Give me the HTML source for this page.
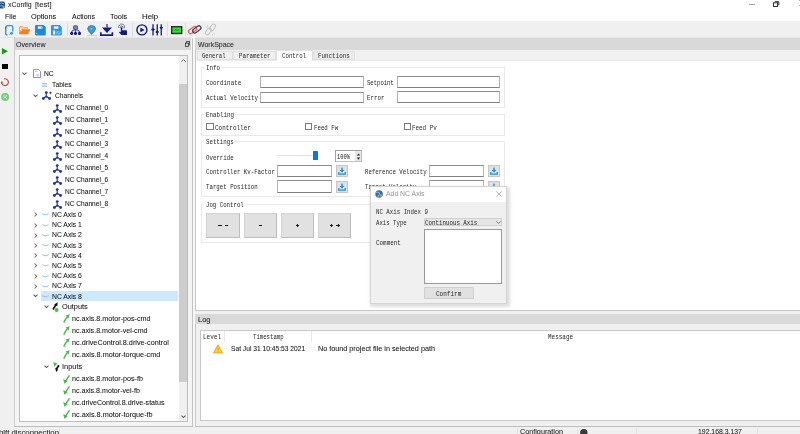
<!DOCTYPE html>
<html><head><meta charset="utf-8">
<style>
*{margin:0;padding:0;box-sizing:border-box}
html,body{width:800px;height:434px;overflow:hidden;background:#f0f0f0;font-family:"Liberation Sans",sans-serif;color:#000;position:relative}
.a{position:absolute}
.t{position:absolute;white-space:nowrap;-webkit-text-stroke:0.06px currentColor}
.m{position:absolute;white-space:nowrap;font-family:"Liberation Mono",monospace}
svg{position:absolute;overflow:visible}
</style></head><body>
<div class="a" style="left:0px;top:0px;width:800px;height:21px;background:#fff;"></div>
<div class="t" style="left:7.92px;top:1.08px;font-size:7.6px;line-height:7.6px;color:#222;transform:scaleX(0.9169);transform-origin:0 0;">xConfig</div>
<div class="t" style="left:35.26px;top:1.08px;font-size:7.6px;line-height:7.6px;color:#222;transform:scaleX(1.0067);transform-origin:0 0;">[test]</div>
<div class="t" style="left:4.82px;top:13.08px;font-size:7.6px;line-height:7.6px;color:#111;transform:scaleX(0.9304);transform-origin:0 0;">File</div>
<div class="t" style="left:31.06px;top:13.08px;font-size:7.6px;line-height:7.6px;color:#111;transform:scaleX(0.9586);transform-origin:0 0;">Options</div>
<div class="t" style="left:71.69px;top:13.08px;font-size:7.6px;line-height:7.6px;color:#111;transform:scaleX(0.9216);transform-origin:0 0;">Actions</div>
<div class="t" style="left:110.44px;top:13.08px;font-size:7.6px;line-height:7.6px;color:#111;transform:scaleX(0.9712);transform-origin:0 0;">Tools</div>
<div class="t" style="left:141.85px;top:13.08px;font-size:7.6px;line-height:7.6px;color:#111;transform:scaleX(1.0409);transform-origin:0 0;">Help</div>
<div class="a" style="left:749px;top:4px;width:5.5px;height:0.9px;background:#9a9a9a;"></div>
<svg style="left:773.4px;top:1px" width="6.5" height="6"><rect x="0.5" y="1.8" width="4" height="3.7" stroke="#333" stroke-width="1" fill="none"/><path d="M1.8 0.6 H5.8 V4.2" stroke="#333" stroke-width="1" fill="none"/></svg>
<svg style="left:798.8px;top:0.3px" width="6" height="7"><path d="M0.5 0.5 L5.5 5.5 M5.5 0.5 L0.5 5.5" stroke="#444" stroke-width="0.9"/></svg>
<div class="a" style="left:0px;top:21px;width:800px;height:16px;background:#f0f0f0;"></div>
<div class="a" style="left:0px;top:37px;width:800px;height:1px;background:#e6e6e6;"></div>
<div class="a" style="left:66.5px;top:23px;width:1px;height:13px;background:#dcdcdc;"></div>
<div class="a" style="left:131.5px;top:23px;width:1px;height:13px;background:#dcdcdc;"></div>
<div class="a" style="left:166.5px;top:23px;width:1px;height:13px;background:#dcdcdc;"></div>
<div class="a" style="left:185.2px;top:23px;width:1px;height:13px;background:#dcdcdc;"></div>
<svg style="left:4.5px;top:24.5px" width="9" height="11" viewBox="0 0 9 11"><path d="M2.6 9.8 H1.8 Q0.7 9.8 0.7 8.7 V3 M0.7 3 Q0.7 0.7 2.8 0.7 H6.5 Q7.8 0.7 7.8 2 V6.5" stroke="#2d92e2" stroke-width="1.3" fill="none"/><path d="M0.7 4.5 V2" stroke="#1a7fd0" stroke-width="1.3"/><circle cx="6.6" cy="8.3" r="1.5" fill="#3a9de6"/><path d="M4.1 9.8 H4.8" stroke="#7bbcef" stroke-width="1"/></svg>
<svg style="left:19px;top:25.5px" width="11.5" height="8.5" viewBox="0 0 11.5 8.5"><path d="M0.5 8 V1 Q0.5 0.5 1 0.5 H3.8 L4.8 1.6 H8.5 V3" stroke="#f6a55e" stroke-width="1" fill="#fbd2ae"/><path d="M2.2 3.2 H11.3 L9.2 8.2 H0.3 Z" fill="#ff7d14"/><path d="M1.5 2.3 L2.5 5" stroke="#fff" stroke-width="0.6"/></svg>
<svg style="left:35.4px;top:24.8px" width="11" height="10.5" viewBox="0 0 11 10.5"><path d="M1.2 0 H8.6 L10.8 2.2 V9.3 Q10.8 10.5 9.6 10.5 H1.2 Q0 10.5 0 9.3 V1.2 Q0 0 1.2 0 Z" fill="#1b8bda"/><rect x="2.8" y="1.4" width="4.6" height="2.3" fill="#fff"/><rect x="6.3" y="1.6" width="0.7" height="1.8" fill="#1b8bda"/><rect x="1.4" y="7.6" width="0.7" height="1.6" fill="#cfe6f8"/></svg>
<svg style="left:51px;top:24.8px" width="11" height="10.5" viewBox="0 0 11 10.5"><path d="M1.2 0 H8.6 L10.8 2.2 V9.3 Q10.8 10.5 9.6 10.5 H1.2 Q0 10.5 0 9.3 V1.2 Q0 0 1.2 0 Z" fill="#2f97e2"/><rect x="2.8" y="1.4" width="4.6" height="2.3" fill="#fff"/><rect x="2" y="5.5" width="2.2" height="4" fill="#e8f3fc"/><rect x="5.3" y="6.2" width="4.2" height="3.2" fill="#7dbdf0"/><path d="M6.5 8.5 L8.5 7" stroke="#2080d0" stroke-width="0.8"/></svg>
<svg style="left:69.5px;top:24.5px" width="11" height="10" viewBox="0 0 11 10"><rect x="3.6" y="0.8" width="3.9" height="3.4" rx="1.3" stroke="#4a50a8" stroke-width="1.1" fill="#8a8ec8"/><path d="M5.5 4 V7.5 M5.5 4.8 Q2 4.8 1.7 7.6 M5.5 4.8 Q9 4.8 9.5 7.6" stroke="#4a50a8" stroke-width="1.1" fill="none"/><circle cx="1.7" cy="8.4" r="1.55" fill="#10147a"/><circle cx="5.5" cy="8.4" r="1.55" fill="#10147a"/><circle cx="9.5" cy="8.4" r="1.55" fill="#10147a"/></svg>
<svg style="left:86.5px;top:24.6px" width="10.5" height="11" viewBox="0 0 10.5 11"><path d="M4.6 9.6 Q0.6 5.4 0.6 3.9 Q0.6 0.4 4.6 0.4 Q8.6 0.4 8.6 3.9 Q8.6 5.4 4.6 9.6 Z" fill="#2ba0ec" stroke="#204a70" stroke-width="0.5"/><circle cx="4.4" cy="3.8" r="1.1" fill="#e0a020"/><rect x="0" y="10" width="10" height="0.8" fill="#c8c8c8"/></svg>
<svg style="left:100.2px;top:24px" width="13.2" height="12" viewBox="0 0 13.2 12"><rect x="6.2" y="0" width="1.6" height="3.6" fill="#4a5ab0"/><path d="M2 3.4 H12 L7 8.9 Z" fill="#141c80"/><path d="M0.8 8.2 V11.1 H12.4 V8.2" stroke="#141c80" stroke-width="1.6" fill="none"/></svg>
<svg style="left:117.6px;top:24px" width="9.6" height="11.6" viewBox="0 0 9.6 11.6"><path d="M0.9 3.8 A2.9 2.9 0 1 1 6 4.6" stroke="#5a66c0" stroke-width="0.9" fill="none"/><path d="M2.6 4.2 A1.3 1.3 0 1 1 4.6 4.3" stroke="#3a46a8" stroke-width="0.8" fill="none"/><path d="M2.8 3.6 Q3.6 2.8 4.2 3.6 V6.2 H8.4 Q9 6.2 9 7 V11 H3.4 L0.8 8.2 Q1.2 7.4 2.4 7.9 L2.8 8.2 Z" fill="#141c80"/></svg>
<svg style="left:135.6px;top:24px" width="12" height="12" viewBox="0 0 12 12"><circle cx="5.9" cy="5.9" r="5" stroke="#141c80" stroke-width="1.4" fill="none"/><path d="M4.3 3.5 L8.6 5.9 L4.3 8.3 Z" fill="#141c80"/></svg>
<svg style="left:151px;top:24px" width="12" height="12" viewBox="0 0 12 12"><path d="M2 0.3 V11.5 M6.25 0.3 V11.5 M10.25 0.3 V11.5" stroke="#141c80" stroke-width="1.3"/><rect x="0.2" y="4.6" width="3.6" height="1.8" rx="0.9" fill="#141c80"/><rect x="4.6" y="7" width="3.3" height="2" rx="1" fill="#141c80"/><rect x="8.7" y="2.8" width="3.2" height="2" rx="1" fill="#141c80"/></svg>
<svg style="left:170.5px;top:25.8px" width="11.4" height="8.2" viewBox="0 0 11.4 8.2"><rect x="0.7" y="0.7" width="10" height="6.8" fill="#2fe02f" stroke="#2a2a36" stroke-width="1.4"/><path d="M3.6 4.5 Q4.8 3 5.8 4 Q6.8 5 8 3.6" stroke="#1a6a1a" stroke-width="0.8" fill="none"/></svg>
<svg style="left:186px;top:23px" width="34" height="14" viewBox="0 0 34 14"><g transform="translate(6.6 7.1) rotate(-37)"><rect x="-4.6" y="-2.1" width="9.2" height="4.2" rx="2.1" stroke="#f06262" stroke-width="1.35" fill="none"/></g><g transform="translate(10.8 6.4) rotate(-37)"><rect x="-4.6" y="-2.1" width="9.2" height="4.2" rx="2.1" stroke="#3b4a5e" stroke-width="1.35" fill="none"/></g><g transform="translate(22.3 8.4) rotate(-55)"><rect x="-3.6" y="-2" width="7.2" height="4" rx="2" stroke="#c6c6c6" stroke-width="1.1" fill="none"/></g><g transform="translate(26.6 4.4) rotate(-55)"><rect x="-3.6" y="-2" width="7.2" height="4" rx="2" stroke="#c6c6c6" stroke-width="1.1" fill="none"/></g><path d="M21.3 2.3 L21.9 4 M19.8 4.2 L21.2 4.8 M27.6 10.3 L28.8 11 M26.4 11.2 L26.8 12.6" stroke="#c6c6c6" stroke-width="0.8"/></svg>
<div class="a" style="left:14px;top:38px;width:178px;height:389px;background:#f4f4f4;"></div>
<div class="a" style="left:13.5px;top:37px;width:1.3px;height:390px;background:#cbcbcb;"></div>
<div class="a" style="left:14.8px;top:38px;width:176.7px;height:11.8px;background:#d9d9d9;"></div>
<div class="t" style="left:15.87px;top:40.98px;font-size:7.6px;line-height:7.6px;color:#222;transform:scaleX(0.9319);transform-origin:0 0;">Overview</div>
<div class="a" style="left:19px;top:55px;width:169px;height:367px;background:#fff;border:1px solid #bdbdbd"></div>
<div class="a" style="left:179px;top:56px;width:8px;height:365px;background:#f0f0f0;"></div>
<div class="a" style="left:179px;top:84px;width:8px;height:298px;background:#cdcdcd;"></div>
<div class="a" style="left:192px;top:37px;width:3px;height:390px;background:#f7f7f7;"></div>
<div class="a" style="left:191.6px;top:38px;width:1px;height:389px;background:#c2c2c2;"></div>
<svg style="left:184.7px;top:41px" width="5" height="6"><rect x="1.6" y="0.5" width="2.9" height="3.3" stroke="#444" stroke-width="0.9" fill="none"/><rect x="0.5" y="2.2" width="2.9" height="3.3" stroke="#444" stroke-width="0.9" fill="#d9d9d9"/></svg>
<div class="a" style="left:40.5px;top:291px;width:137.5px;height:9.7px;background:#cde8ff;"></div>
<svg style="left:22px;top:72px" width="5" height="4"><path d="M0.5 0.6 L2.5 2.6 L4.5 0.6" fill="none" stroke="#5a5a5a" stroke-width="1.05"/></svg>
<svg style="left:33px;top:69px" width="8" height="9"><path d="M0.5 0.5 H5.5 L7.5 2.5 V8.5 H0.5 Z" stroke="#7d82c8" stroke-width="0.9" fill="none"/><path d="M2.3 2.5 h1.5 M5 5 v2.5 M2.5 6 h1" stroke="#8a8fd0" stroke-width="0.8"/></svg>
<div class="t" style="left:44.05px;top:70.18px;font-size:7.6px;line-height:7.6px;color:#111;transform:scaleX(0.8838);transform-origin:0 0;">NC</div>
<svg style="left:42px;top:83px" width="5" height="4"><path d="M0 0.5 h5 M0 2 h5 M0 3.5 h5" stroke="#9cc2ea" stroke-width="0.9"/></svg>
<div class="t" style="left:52.05px;top:81.38px;font-size:7.6px;line-height:7.6px;color:#111;transform:scaleX(0.8917);transform-origin:0 0;">Tables</div>
<svg style="left:32.5px;top:93.7px" width="5" height="4"><path d="M0.5 0.6 L2.5 2.6 L4.5 0.6" fill="none" stroke="#5a5a5a" stroke-width="1.05"/></svg>
<svg style="left:42.4px;top:90.8px" width="10" height="9"><path d="M4.3 1.5 L4.3 4.8 L1.3 7.6 M4.3 4.8 L7.4 7.6 M2.6 6.2 H6" stroke="#27379a" stroke-width="1.1" fill="none"/><circle cx="4.3" cy="1.6" r="1.45" fill="#27379a"/><circle cx="1.4" cy="7.5" r="1.45" fill="#27379a"/><circle cx="7.6" cy="7.5" r="1.45" fill="#27379a"/><circle cx="8.5" cy="1.8" r="1.1" fill="#27379a"/></svg>
<div class="t" style="left:54.57px;top:92.18px;font-size:7.6px;line-height:7.6px;color:#111;transform:scaleX(0.8742);transform-origin:0 0;">Channels</div>
<svg style="left:53.4px;top:103.60000000000001px" width="9" height="9"><path d="M4.2 1.5 L4.2 4.8 L1.3 7.6 M4.2 4.8 L7.6 7.6 M2.6 6.2 H6" stroke="#27379a" stroke-width="1.1" fill="none"/><circle cx="4.2" cy="1.6" r="1.45" fill="#27379a"/><circle cx="1.4" cy="7.5" r="1.45" fill="#27379a"/><circle cx="7.6" cy="7.5" r="1.45" fill="#27379a"/></svg>
<div class="t" style="left:65.46px;top:104.08px;font-size:7.6px;line-height:7.6px;color:#111;transform:scaleX(0.8664);transform-origin:0 0;">NC Channel_0</div>
<svg style="left:53.4px;top:115.65px" width="9" height="9"><path d="M4.2 1.5 L4.2 4.8 L1.3 7.6 M4.2 4.8 L7.6 7.6 M2.6 6.2 H6" stroke="#27379a" stroke-width="1.1" fill="none"/><circle cx="4.2" cy="1.6" r="1.45" fill="#27379a"/><circle cx="1.4" cy="7.5" r="1.45" fill="#27379a"/><circle cx="7.6" cy="7.5" r="1.45" fill="#27379a"/></svg>
<div class="t" style="left:65.46px;top:116.13px;font-size:7.6px;line-height:7.6px;color:#111;transform:scaleX(0.8678);transform-origin:0 0;">NC Channel_1</div>
<svg style="left:53.4px;top:127.7px" width="9" height="9"><path d="M4.2 1.5 L4.2 4.8 L1.3 7.6 M4.2 4.8 L7.6 7.6 M2.6 6.2 H6" stroke="#27379a" stroke-width="1.1" fill="none"/><circle cx="4.2" cy="1.6" r="1.45" fill="#27379a"/><circle cx="1.4" cy="7.5" r="1.45" fill="#27379a"/><circle cx="7.6" cy="7.5" r="1.45" fill="#27379a"/></svg>
<div class="t" style="left:65.46px;top:128.18px;font-size:7.6px;line-height:7.6px;color:#111;transform:scaleX(0.8680);transform-origin:0 0;">NC Channel_2</div>
<svg style="left:53.4px;top:139.75px" width="9" height="9"><path d="M4.2 1.5 L4.2 4.8 L1.3 7.6 M4.2 4.8 L7.6 7.6 M2.6 6.2 H6" stroke="#27379a" stroke-width="1.1" fill="none"/><circle cx="4.2" cy="1.6" r="1.45" fill="#27379a"/><circle cx="1.4" cy="7.5" r="1.45" fill="#27379a"/><circle cx="7.6" cy="7.5" r="1.45" fill="#27379a"/></svg>
<div class="t" style="left:65.46px;top:140.23px;font-size:7.6px;line-height:7.6px;color:#111;transform:scaleX(0.8671);transform-origin:0 0;">NC Channel_3</div>
<svg style="left:53.4px;top:151.8px" width="9" height="9"><path d="M4.2 1.5 L4.2 4.8 L1.3 7.6 M4.2 4.8 L7.6 7.6 M2.6 6.2 H6" stroke="#27379a" stroke-width="1.1" fill="none"/><circle cx="4.2" cy="1.6" r="1.45" fill="#27379a"/><circle cx="1.4" cy="7.5" r="1.45" fill="#27379a"/><circle cx="7.6" cy="7.5" r="1.45" fill="#27379a"/></svg>
<div class="t" style="left:65.46px;top:152.28px;font-size:7.6px;line-height:7.6px;color:#111;transform:scaleX(0.8652);transform-origin:0 0;">NC Channel_4</div>
<svg style="left:53.4px;top:163.85px" width="9" height="9"><path d="M4.2 1.5 L4.2 4.8 L1.3 7.6 M4.2 4.8 L7.6 7.6 M2.6 6.2 H6" stroke="#27379a" stroke-width="1.1" fill="none"/><circle cx="4.2" cy="1.6" r="1.45" fill="#27379a"/><circle cx="1.4" cy="7.5" r="1.45" fill="#27379a"/><circle cx="7.6" cy="7.5" r="1.45" fill="#27379a"/></svg>
<div class="t" style="left:65.46px;top:164.33px;font-size:7.6px;line-height:7.6px;color:#111;transform:scaleX(0.8668);transform-origin:0 0;">NC Channel_5</div>
<svg style="left:53.4px;top:175.9px" width="9" height="9"><path d="M4.2 1.5 L4.2 4.8 L1.3 7.6 M4.2 4.8 L7.6 7.6 M2.6 6.2 H6" stroke="#27379a" stroke-width="1.1" fill="none"/><circle cx="4.2" cy="1.6" r="1.45" fill="#27379a"/><circle cx="1.4" cy="7.5" r="1.45" fill="#27379a"/><circle cx="7.6" cy="7.5" r="1.45" fill="#27379a"/></svg>
<div class="t" style="left:65.46px;top:176.38px;font-size:7.6px;line-height:7.6px;color:#111;transform:scaleX(0.8671);transform-origin:0 0;">NC Channel_6</div>
<svg style="left:53.4px;top:187.95px" width="9" height="9"><path d="M4.2 1.5 L4.2 4.8 L1.3 7.6 M4.2 4.8 L7.6 7.6 M2.6 6.2 H6" stroke="#27379a" stroke-width="1.1" fill="none"/><circle cx="4.2" cy="1.6" r="1.45" fill="#27379a"/><circle cx="1.4" cy="7.5" r="1.45" fill="#27379a"/><circle cx="7.6" cy="7.5" r="1.45" fill="#27379a"/></svg>
<div class="t" style="left:65.46px;top:188.43px;font-size:7.6px;line-height:7.6px;color:#111;transform:scaleX(0.8680);transform-origin:0 0;">NC Channel_7</div>
<svg style="left:53.4px;top:200.0px" width="9" height="9"><path d="M4.2 1.5 L4.2 4.8 L1.3 7.6 M4.2 4.8 L7.6 7.6 M2.6 6.2 H6" stroke="#27379a" stroke-width="1.1" fill="none"/><circle cx="4.2" cy="1.6" r="1.45" fill="#27379a"/><circle cx="1.4" cy="7.5" r="1.45" fill="#27379a"/><circle cx="7.6" cy="7.5" r="1.45" fill="#27379a"/></svg>
<div class="t" style="left:65.46px;top:200.48px;font-size:7.6px;line-height:7.6px;color:#111;transform:scaleX(0.8671);transform-origin:0 0;">NC Channel_8</div>
<svg style="left:34px;top:212.3px" width="4" height="5"><path d="M0.6 0.5 L2.6 2.5 L0.6 4.5" fill="none" stroke="#6a6a6a" stroke-width="1.05"/></svg>
<svg style="left:42px;top:213.3px" width="7" height="3"><path d="M0.3 0.8 Q3.5 2.8 6.7 0.8" stroke="#8fb8e8" stroke-width="0.9" fill="none"/></svg>
<div class="t" style="left:51.64px;top:210.98px;font-size:7.6px;line-height:7.6px;color:#111;transform:scaleX(0.8936);transform-origin:0 0;">NC Axis 0</div>
<svg style="left:34px;top:222.5px" width="4" height="5"><path d="M0.6 0.5 L2.6 2.5 L0.6 4.5" fill="none" stroke="#6a6a6a" stroke-width="1.05"/></svg>
<svg style="left:42px;top:223.5px" width="7" height="3"><path d="M0.3 0.8 Q3.5 2.8 6.7 0.8" stroke="#8fb8e8" stroke-width="0.9" fill="none"/></svg>
<div class="t" style="left:51.64px;top:221.18px;font-size:7.6px;line-height:7.6px;color:#111;transform:scaleX(0.8957);transform-origin:0 0;">NC Axis 1</div>
<svg style="left:34px;top:232.70000000000002px" width="4" height="5"><path d="M0.6 0.5 L2.6 2.5 L0.6 4.5" fill="none" stroke="#6a6a6a" stroke-width="1.05"/></svg>
<svg style="left:42px;top:233.70000000000002px" width="7" height="3"><path d="M0.3 0.8 Q3.5 2.8 6.7 0.8" stroke="#8fb8e8" stroke-width="0.9" fill="none"/></svg>
<div class="t" style="left:51.64px;top:231.38px;font-size:7.6px;line-height:7.6px;color:#111;transform:scaleX(0.8961);transform-origin:0 0;">NC Axis 2</div>
<svg style="left:34px;top:242.9px" width="4" height="5"><path d="M0.6 0.5 L2.6 2.5 L0.6 4.5" fill="none" stroke="#6a6a6a" stroke-width="1.05"/></svg>
<svg style="left:42px;top:243.9px" width="7" height="3"><path d="M0.3 0.8 Q3.5 2.8 6.7 0.8" stroke="#8fb8e8" stroke-width="0.9" fill="none"/></svg>
<div class="t" style="left:51.64px;top:241.58px;font-size:7.6px;line-height:7.6px;color:#111;transform:scaleX(0.8947);transform-origin:0 0;">NC Axis 3</div>
<svg style="left:34px;top:253.10000000000002px" width="4" height="5"><path d="M0.6 0.5 L2.6 2.5 L0.6 4.5" fill="none" stroke="#6a6a6a" stroke-width="1.05"/></svg>
<svg style="left:42px;top:254.10000000000002px" width="7" height="3"><path d="M0.3 0.8 Q3.5 2.8 6.7 0.8" stroke="#8fb8e8" stroke-width="0.9" fill="none"/></svg>
<div class="t" style="left:51.64px;top:251.78px;font-size:7.6px;line-height:7.6px;color:#111;transform:scaleX(0.8917);transform-origin:0 0;">NC Axis 4</div>
<svg style="left:34px;top:263.3px" width="4" height="5"><path d="M0.6 0.5 L2.6 2.5 L0.6 4.5" fill="none" stroke="#6a6a6a" stroke-width="1.05"/></svg>
<svg style="left:42px;top:264.3px" width="7" height="3"><path d="M0.3 0.8 Q3.5 2.8 6.7 0.8" stroke="#8fb8e8" stroke-width="0.9" fill="none"/></svg>
<div class="t" style="left:51.64px;top:261.98px;font-size:7.6px;line-height:7.6px;color:#111;transform:scaleX(0.8943);transform-origin:0 0;">NC Axis 5</div>
<svg style="left:34px;top:273.5px" width="4" height="5"><path d="M0.6 0.5 L2.6 2.5 L0.6 4.5" fill="none" stroke="#6a6a6a" stroke-width="1.05"/></svg>
<svg style="left:42px;top:274.5px" width="7" height="3"><path d="M0.3 0.8 Q3.5 2.8 6.7 0.8" stroke="#8fb8e8" stroke-width="0.9" fill="none"/></svg>
<div class="t" style="left:51.64px;top:272.18px;font-size:7.6px;line-height:7.6px;color:#111;transform:scaleX(0.8947);transform-origin:0 0;">NC Axis 6</div>
<svg style="left:34px;top:283.7px" width="4" height="5"><path d="M0.6 0.5 L2.6 2.5 L0.6 4.5" fill="none" stroke="#6a6a6a" stroke-width="1.05"/></svg>
<svg style="left:42px;top:284.7px" width="7" height="3"><path d="M0.3 0.8 Q3.5 2.8 6.7 0.8" stroke="#8fb8e8" stroke-width="0.9" fill="none"/></svg>
<div class="t" style="left:51.64px;top:282.38px;font-size:7.6px;line-height:7.6px;color:#111;transform:scaleX(0.8961);transform-origin:0 0;">NC Axis 7</div>
<svg style="left:32.5px;top:294.4px" width="5" height="4"><path d="M0.5 0.6 L2.5 2.6 L4.5 0.6" fill="none" stroke="#5a5a5a" stroke-width="1.05"/></svg>
<svg style="left:42px;top:294.9px" width="7" height="3"><path d="M0.3 0.8 Q3.5 2.8 6.7 0.8" stroke="#8fb8e8" stroke-width="0.9" fill="none"/></svg>
<div class="t" style="left:51.64px;top:292.58px;font-size:7.6px;line-height:7.6px;color:#111;transform:scaleX(0.8947);transform-origin:0 0;">NC Axis 8</div>
<svg style="left:43.5px;top:305.3px" width="5" height="4"><path d="M0.5 0.6 L2.5 2.6 L4.5 0.6" fill="none" stroke="#5a5a5a" stroke-width="1.05"/></svg>
<svg style="left:52px;top:302px" width="7" height="10"><path d="M1 7.5 L4 2.5" stroke="#111" stroke-width="1.6"/><path d="M2.2 2.4 L5.6 0.2 L5.4 4.2 Z" fill="#111"/><circle cx="4.6" cy="8" r="2" fill="#48bd48"/></svg>
<div class="t" style="left:61.85px;top:303.48px;font-size:7.6px;line-height:7.6px;color:#111;transform:scaleX(0.9698);transform-origin:0 0;">Outputs</div>
<svg style="left:63.3px;top:314.25px" width="7" height="9"><path d="M0.8 8.6 Q2.3 5 4.6 2.4" stroke="#48bd48" stroke-width="1.5" fill="none"/><path d="M2.6 1.6 L6.6 0.2 L5.8 4.2 Z" fill="#48bd48"/></svg>
<div class="t" style="left:72.23px;top:315.43px;font-size:7.6px;line-height:7.6px;color:#111;transform:scaleX(0.9451);transform-origin:0 0;">nc.axis.8.motor-pos-cmd</div>
<svg style="left:63.3px;top:326.2px" width="7" height="9"><path d="M0.8 8.6 Q2.3 5 4.6 2.4" stroke="#48bd48" stroke-width="1.5" fill="none"/><path d="M2.6 1.6 L6.6 0.2 L5.8 4.2 Z" fill="#48bd48"/></svg>
<div class="t" style="left:72.23px;top:327.38px;font-size:7.6px;line-height:7.6px;color:#111;transform:scaleX(0.9375);transform-origin:0 0;">nc.axis.8.motor-vel-cmd</div>
<svg style="left:63.3px;top:338.15px" width="7" height="9"><path d="M0.8 8.6 Q2.3 5 4.6 2.4" stroke="#48bd48" stroke-width="1.5" fill="none"/><path d="M2.6 1.6 L6.6 0.2 L5.8 4.2 Z" fill="#48bd48"/></svg>
<div class="t" style="left:72.22px;top:339.33px;font-size:7.6px;line-height:7.6px;color:#111;transform:scaleX(0.9554);transform-origin:0 0;">nc.driveControl.8.drive-control</div>
<svg style="left:63.3px;top:350.1px" width="7" height="9"><path d="M0.8 8.6 Q2.3 5 4.6 2.4" stroke="#48bd48" stroke-width="1.5" fill="none"/><path d="M2.6 1.6 L6.6 0.2 L5.8 4.2 Z" fill="#48bd48"/></svg>
<div class="t" style="left:72.22px;top:351.28px;font-size:7.6px;line-height:7.6px;color:#111;transform:scaleX(0.9551);transform-origin:0 0;">nc.axis.8.motor-torque-cmd</div>
<svg style="left:43.5px;top:365px" width="5" height="4"><path d="M0.5 0.6 L2.5 2.6 L4.5 0.6" fill="none" stroke="#5a5a5a" stroke-width="1.05"/></svg>
<svg style="left:52.5px;top:361.5px" width="7" height="10"><path d="M0.2 0.2 L4.4 1.2 L1.4 4.8 Z" fill="#48bd48"/><path d="M5.8 3.2 L3.2 7.5" stroke="#111" stroke-width="1.8"/><path d="M2.2 6 L3.2 9.9 L5.2 7.8 Z" fill="#111"/></svg>
<div class="t" style="left:61.52px;top:363.18px;font-size:7.6px;line-height:7.6px;color:#111;transform:scaleX(0.9732);transform-origin:0 0;">Inputs</div>
<svg style="left:63.3px;top:374.5px" width="7" height="9"><path d="M6.4 0.4 Q4.2 3.5 2.6 6.4" stroke="#48bd48" stroke-width="1.5" fill="none"/><path d="M0.2 4.0 L1.4 8.8 L4.6 6.2 Z" fill="#48bd48"/></svg>
<div class="t" style="left:72.23px;top:375.18px;font-size:7.6px;line-height:7.6px;color:#111;transform:scaleX(0.9440);transform-origin:0 0;">nc.axis.8.motor-pos-fb</div>
<svg style="left:63.3px;top:386.45px" width="7" height="9"><path d="M6.4 0.4 Q4.2 3.5 2.6 6.4" stroke="#48bd48" stroke-width="1.5" fill="none"/><path d="M0.2 4.0 L1.4 8.8 L4.6 6.2 Z" fill="#48bd48"/></svg>
<div class="t" style="left:72.23px;top:387.13px;font-size:7.6px;line-height:7.6px;color:#111;transform:scaleX(0.9356);transform-origin:0 0;">nc.axis.8.motor-vel-fb</div>
<svg style="left:63.3px;top:398.4px" width="7" height="9"><path d="M6.4 0.4 Q4.2 3.5 2.6 6.4" stroke="#48bd48" stroke-width="1.5" fill="none"/><path d="M0.2 4.0 L1.4 8.8 L4.6 6.2 Z" fill="#48bd48"/></svg>
<div class="t" style="left:72.23px;top:399.08px;font-size:7.6px;line-height:7.6px;color:#111;transform:scaleX(0.9372);transform-origin:0 0;">nc.driveControl.8.drive-status</div>
<svg style="left:63.3px;top:410.35px" width="7" height="9"><path d="M6.4 0.4 Q4.2 3.5 2.6 6.4" stroke="#48bd48" stroke-width="1.5" fill="none"/><path d="M0.2 4.0 L1.4 8.8 L4.6 6.2 Z" fill="#48bd48"/></svg>
<div class="t" style="left:72.22px;top:411.03px;font-size:7.6px;line-height:7.6px;color:#111;transform:scaleX(0.9550);transform-origin:0 0;">nc.axis.8.motor-torque-fb</div>
<svg style="left:181px;top:58.5px" width="5" height="3"><path d="M0.3 2.7 L2.5 0.5 L4.7 2.7" fill="none" stroke="#555" stroke-width="0.8"/></svg>
<svg style="left:181px;top:414.5px" width="5" height="4"><path d="M0.5 0.6 L2.5 2.6 L4.5 0.6" fill="none" stroke="#5a5a5a" stroke-width="1.05"/></svg>
<div class="a" style="left:195px;top:38px;width:605px;height:12px;background:#d9d9d9;"></div>
<div class="t" style="left:197.77px;top:40.98px;font-size:7.6px;line-height:7.6px;color:#222;transform:scaleX(0.9181);transform-origin:0 0;">WorkSpace</div>
<div class="a" style="left:195px;top:50px;width:605px;height:261px;background:#fff;border-left:1px solid #c8c8c8;border-bottom:1px solid #c8c8c8"></div>
<div class="a" style="left:196px;top:50px;width:604px;height:9.5px;background:#f0f0f0;"></div>
<div class="a" style="left:196.5px;top:50.5px;width:36.0px;height:9.5px;background:#f0f0f0;border:1px solid;border-color:#e0e0e0;"></div>
<div class="a" style="left:232.5px;top:50.5px;width:43.19999999999999px;height:9.5px;background:#f0f0f0;border:1px solid;border-color:#e0e0e0;"></div>
<div class="a" style="left:313.2px;top:50.5px;width:42.0px;height:9.5px;background:#ebebeb;border:1px solid;border-color:#e0e0e0;"></div>
<div class="a" style="left:275.7px;top:50px;width:37.5px;height:10px;background:#fff;border:1px solid;border-color:#e0e0e0;border-bottom:none"></div>
<div class="a" style="left:196px;top:59.5px;width:604px;height:0.8px;background:#ebebeb;"></div>
<div class="a" style="left:276.7px;top:59.3px;width:35.5px;height:2px;background:#fff;"></div>
<div class="m" style="left:201.69px;top:53.24px;font-size:7.0px;line-height:7.0px;color:#262626;transform:scaleX(0.8032);transform-origin:0 0;">General</div>
<div class="m" style="left:238.54px;top:53.24px;font-size:7.0px;line-height:7.0px;color:#262626;transform:scaleX(0.8326);transform-origin:0 0;">Parameter</div>
<div class="m" style="left:281.88px;top:53.24px;font-size:7.0px;line-height:7.0px;color:#262626;transform:scaleX(0.8206);transform-origin:0 0;">Control</div>
<div class="m" style="left:317.95px;top:53.24px;font-size:7.0px;line-height:7.0px;color:#262626;transform:scaleX(0.8394);transform-origin:0 0;">Functions</div>
<div class="a" style="left:200.9px;top:67.2px;width:304.6px;height:40.599999999999994px;background:transparent;border:1px solid;border-color:#e9e9e9;"></div>
<div class="a" style="left:204.6px;top:65.2px;width:17.1px;height:4px;background:#fff;"></div>
<div class="m" style="left:206.03px;top:65.14px;font-size:7.0px;line-height:7.0px;color:#262626;transform:scaleX(0.8362);transform-origin:0 0;">Info</div>
<div class="m" style="left:205.58px;top:80.24px;font-size:7.0px;line-height:7.0px;color:#262626;transform:scaleX(0.8380);transform-origin:0 0;">Coordinate</div>
<div class="m" style="left:205.90px;top:95.14px;font-size:7.0px;line-height:7.0px;color:#262626;transform:scaleX(0.8252);transform-origin:0 0;">Actual Velocity</div>
<div class="a" style="left:259.7px;top:76.2px;width:104.0px;height:11.5px;background:#fff;border:1px solid;border-color:#8c8c8c #b4b4b4 #808080 #b4b4b4;"></div>
<div class="a" style="left:259.7px;top:91.5px;width:104.0px;height:11.200000000000003px;background:#fff;border:1px solid;border-color:#8c8c8c #b4b4b4 #808080 #b4b4b4;"></div>
<div class="m" style="left:366.79px;top:80.14px;font-size:7.0px;line-height:7.0px;color:#262626;transform:scaleX(0.7971);transform-origin:0 0;">Setpoint</div>
<div class="m" style="left:366.54px;top:95.14px;font-size:7.0px;line-height:7.0px;color:#262626;transform:scaleX(0.8323);transform-origin:0 0;">Error</div>
<div class="a" style="left:397px;top:76.4px;width:103px;height:11.199999999999989px;background:#fff;border:1px solid;border-color:#8c8c8c #b4b4b4 #808080 #b4b4b4;"></div>
<div class="a" style="left:397px;top:91.3px;width:103px;height:11.299999999999997px;background:#fff;border:1px solid;border-color:#8c8c8c #b4b4b4 #808080 #b4b4b4;"></div>
<div class="a" style="left:200.9px;top:114.2px;width:304.6px;height:21.60000000000001px;background:transparent;border:1px solid;border-color:#e9e9e9;"></div>
<div class="a" style="left:204px;top:112.2px;width:31px;height:4px;background:#fff;"></div>
<div class="m" style="left:205.54px;top:112.14px;font-size:7.0px;line-height:7.0px;color:#262626;transform:scaleX(0.8318);transform-origin:0 0;">Enabling</div>
<div class="a" style="left:206.4px;top:123.2px;width:7.199999999999989px;height:7.200000000000003px;background:#fff;border:1px solid;border-color:#7a7a7a;"></div>
<div class="m" style="left:214.67px;top:124.54px;font-size:7.0px;line-height:7.0px;color:#262626;transform:scaleX(0.8537);transform-origin:0 0;">Controller</div>
<div class="a" style="left:305px;top:123.2px;width:7.199999999999989px;height:7.200000000000003px;background:#fff;border:1px solid;border-color:#7a7a7a;"></div>
<div class="m" style="left:313.86px;top:124.54px;font-size:7.0px;line-height:7.0px;color:#262626;transform:scaleX(0.8229);transform-origin:0 0;">Feed Fw</div>
<div class="a" style="left:404px;top:123.2px;width:7.199999999999989px;height:7.200000000000003px;background:#fff;border:1px solid;border-color:#7a7a7a;"></div>
<div class="m" style="left:412.45px;top:124.54px;font-size:7.0px;line-height:7.0px;color:#262626;transform:scaleX(0.8418);transform-origin:0 0;">Feed Pv</div>
<div class="a" style="left:200.9px;top:141.4px;width:304.6px;height:56.099999999999994px;background:transparent;border:1px solid;border-color:#e9e9e9;"></div>
<div class="a" style="left:204px;top:139.4px;width:31px;height:4px;background:#fff;"></div>
<div class="m" style="left:205.78px;top:139.34px;font-size:7.0px;line-height:7.0px;color:#262626;transform:scaleX(0.8240);transform-origin:0 0;">Settings</div>
<div class="m" style="left:205.72px;top:154.54px;font-size:7.0px;line-height:7.0px;color:#262626;transform:scaleX(0.8229);transform-origin:0 0;">Override</div>
<div class="a" style="left:277px;top:154.8px;width:36px;height:1.6px;background:#e2e2e2;"></div>
<div class="a" style="left:312.6px;top:151.3px;width:5.5px;height:8.7px;background:#0a78d8;border-radius:0.5px"></div>
<div class="a" style="left:335px;top:150px;width:26.600000000000023px;height:11.800000000000011px;background:#fff;border:1px solid;border-color:#a0a0a0 #c0c0c0 #c0c0c0 #a0a0a0;"></div>
<div class="m" style="left:336.81px;top:153.94px;font-size:7.0px;line-height:7.0px;color:#111;transform:scaleX(0.7667);transform-origin:0 0;">100%</div>
<div class="a" style="left:355px;top:151px;width:5.6px;height:9.8px;background:#e6e6e6;"></div>
<svg style="left:355.5px;top:151.5px" width="5" height="9"><path d="M0.9 3.6 L2.5 1.4 L4.1 3.6 Z M0.9 5.6 L2.5 7.8 L4.1 5.6 Z" fill="#222"/></svg>
<div class="m" style="left:205.68px;top:168.94px;font-size:7.0px;line-height:7.0px;color:#262626;transform:scaleX(0.8192);transform-origin:0 0;">Controller Kv-Factor</div>
<div class="a" style="left:277.2px;top:164.9px;width:55.30000000000001px;height:12.400000000000006px;background:#fff;border:1px solid;border-color:#8c8c8c #b4b4b4 #808080 #b4b4b4;"></div>
<div class="a" style="left:335.7px;top:165.2px;width:12.0px;height:12.0px;background:#e1e1e1;border:1px solid;border-color:#c6c6c6;"></div>
<svg style="left:337.7px;top:167.2px" width="8" height="8"><rect x="3.3" y="0.6" width="1.4" height="2.6" fill="#1a8ad8"/><path d="M1.6 3 H6.4 L4 5.4 Z" fill="#1a8ad8"/><path d="M0.8 5 V7.2 H7.2 V5" stroke="#1a8ad8" stroke-width="1.2" fill="none"/></svg>
<div class="m" style="left:205.79px;top:184.14px;font-size:7.0px;line-height:7.0px;color:#262626;transform:scaleX(0.8207);transform-origin:0 0;">Target Position</div>
<div class="a" style="left:277.2px;top:180.1px;width:55.30000000000001px;height:12.5px;background:#fff;border:1px solid;border-color:#8c8c8c #b4b4b4 #808080 #b4b4b4;"></div>
<div class="a" style="left:335.7px;top:180.8px;width:12.0px;height:12.0px;background:#e1e1e1;border:1px solid;border-color:#c6c6c6;"></div>
<svg style="left:337.7px;top:182.8px" width="8" height="8"><rect x="3.3" y="0.6" width="1.4" height="2.6" fill="#1a8ad8"/><path d="M1.6 3 H6.4 L4 5.4 Z" fill="#1a8ad8"/><path d="M0.8 5 V7.2 H7.2 V5" stroke="#1a8ad8" stroke-width="1.2" fill="none"/></svg>
<div class="m" style="left:364.55px;top:168.94px;font-size:7.0px;line-height:7.0px;color:#262626;transform:scaleX(0.8152);transform-origin:0 0;">Reference Velocity</div>
<div class="a" style="left:429px;top:165px;width:55.39999999999998px;height:12.199999999999989px;background:#fff;border:1px solid;border-color:#8c8c8c #b4b4b4 #808080 #b4b4b4;"></div>
<div class="a" style="left:488px;top:165px;width:12px;height:12px;background:#e1e1e1;border:1px solid;border-color:#c6c6c6;"></div>
<svg style="left:490.0px;top:167.0px" width="8" height="8"><rect x="3.3" y="0.6" width="1.4" height="2.6" fill="#1a8ad8"/><path d="M1.6 3 H6.4 L4 5.4 Z" fill="#1a8ad8"/><path d="M0.8 5 V7.2 H7.2 V5" stroke="#1a8ad8" stroke-width="1.2" fill="none"/></svg>
<div class="m" style="left:364.79px;top:184.14px;font-size:7.0px;line-height:7.0px;color:#262626;transform:scaleX(0.8158);transform-origin:0 0;">Target Velocity</div>
<div class="a" style="left:429px;top:180.2px;width:55.39999999999998px;height:12.400000000000006px;background:#fff;border:1px solid;border-color:#8c8c8c #b4b4b4 #808080 #b4b4b4;"></div>
<div class="a" style="left:488px;top:180.5px;width:12px;height:12.0px;background:#e1e1e1;border:1px solid;border-color:#c6c6c6;"></div>
<svg style="left:490.0px;top:182.5px" width="8" height="8"><rect x="3.3" y="0.6" width="1.4" height="2.6" fill="#1a8ad8"/><path d="M1.6 3 H6.4 L4 5.4 Z" fill="#1a8ad8"/><path d="M0.8 5 V7.2 H7.2 V5" stroke="#1a8ad8" stroke-width="1.2" fill="none"/></svg>
<div class="a" style="left:200.9px;top:204.2px;width:304.6px;height:39.0px;background:transparent;border:1px solid;border-color:#e9e9e9;"></div>
<div class="a" style="left:204px;top:202.2px;width:41px;height:4px;background:#fff;"></div>
<div class="m" style="left:205.51px;top:202.14px;font-size:7.0px;line-height:7.0px;color:#262626;transform:scaleX(0.8181);transform-origin:0 0;">Jog Control</div>
<div class="a" style="left:206.4px;top:213px;width:33.599999999999994px;height:24.599999999999994px;background:#e1e1e1;border:1px solid;border-color:#d2d2d2 #bdbdbd #bdbdbd #d2d2d2;"></div>
<div class="a" style="left:244px;top:213px;width:33px;height:24.599999999999994px;background:#e1e1e1;border:1px solid;border-color:#d2d2d2 #bdbdbd #bdbdbd #d2d2d2;"></div>
<div class="a" style="left:281.2px;top:213px;width:32.60000000000002px;height:24.599999999999994px;background:#e1e1e1;border:1px solid;border-color:#d2d2d2 #bdbdbd #bdbdbd #d2d2d2;"></div>
<div class="a" style="left:318px;top:213px;width:33px;height:24.599999999999994px;background:#e1e1e1;border:1px solid;border-color:#d2d2d2 #bdbdbd #bdbdbd #d2d2d2;"></div>
<div class="a" style="left:218.2px;top:224.8px;width:3.4px;height:1.2px;background:#1a1a1a;"></div>
<div class="a" style="left:224.6px;top:224.8px;width:3.4px;height:1.2px;background:#1a1a1a;"></div>
<div class="a" style="left:258.6px;top:224.8px;width:3.4px;height:1.2px;background:#1a1a1a;"></div>
<div class="a" style="left:295.8px;top:224.70000000000002px;width:3.6px;height:1.2px;background:#1a1a1a;"></div>
<div class="a" style="left:297.0px;top:223.8px;width:1.2px;height:3px;background:#1a1a1a;"></div>
<div class="a" style="left:329.59999999999997px;top:224.70000000000002px;width:3.6px;height:1.2px;background:#1a1a1a;"></div>
<div class="a" style="left:330.79999999999995px;top:223.8px;width:1.2px;height:3px;background:#1a1a1a;"></div>
<div class="a" style="left:336.4px;top:224.70000000000002px;width:3.6px;height:1.2px;background:#1a1a1a;"></div>
<div class="a" style="left:337.59999999999997px;top:223.8px;width:1.2px;height:3px;background:#1a1a1a;"></div>
<div class="a" style="left:370px;top:187px;width:139.5px;height:120px;background:rgba(0,0,0,0.13);border-radius:2px;filter:blur(1.6px)"></div>
<div class="a" style="left:370.2px;top:186.2px;width:136.8px;height:118.1px;background:#f0f0f0;border:1px solid #d4d4d4"></div>
<div class="a" style="left:371.2px;top:187.2px;width:134.8px;height:15px;background:#fff;"></div>
<svg style="left:374.6px;top:190.3px" width="8.4" height="8"><circle cx="4.1" cy="4" r="3.8" fill="#2f6fb0"/><path d="M1.2 2.5 Q3 1.5 4.4 2.8 Q5.2 4.2 3.6 5 Q2.6 5.6 3 7.2" stroke="#9fd0f0" stroke-width="0.9" fill="none"/><circle cx="6" cy="5.6" r="1.4" fill="#c8a040"/></svg>
<div class="t" style="left:385.79px;top:190.48px;font-size:7.6px;line-height:7.6px;color:#9a9a9a;transform:scaleX(0.9039);transform-origin:0 0;">Add NC Axis</div>
<svg style="left:495.6px;top:191.2px" width="6" height="6"><path d="M0.4 0.4 L5.6 5.6 M5.6 0.4 L0.4 5.6" stroke="#a0a0a0" stroke-width="0.8"/></svg>
<div class="m" style="left:375.54px;top:208.94px;font-size:7.0px;line-height:7.0px;color:#262626;transform:scaleX(0.8230);transform-origin:0 0;">NC Axis Index 9</div>
<div class="m" style="left:376.00px;top:219.54px;font-size:7.0px;line-height:7.0px;color:#262626;transform:scaleX(0.8139);transform-origin:0 0;">Axis Type</div>
<div class="a" style="left:423.5px;top:217.6px;width:78.69999999999999px;height:8.700000000000017px;background:#e5e5e5;border:1px solid;border-color:#d0d0d0;"></div>
<div class="m" style="left:424.88px;top:219.84px;font-size:7.0px;line-height:7.0px;color:#262626;transform:scaleX(0.8300);transform-origin:0 0;">Continuous Axis</div>
<svg style="left:495.6px;top:220.5px" width="5" height="3"><path d="M0.3 0.3 L2.5 2.5 L4.7 0.3" fill="none" stroke="#666" stroke-width="0.8"/></svg>
<div class="m" style="left:376.17px;top:240.24px;font-size:7.0px;line-height:7.0px;color:#262626;transform:scaleX(0.8480);transform-origin:0 0;">Comment</div>
<div class="a" style="left:423.5px;top:228.5px;width:78.69999999999999px;height:55.19999999999999px;background:#fff;border:1px solid;border-color:#9a9a9a;"></div>
<div class="a" style="left:424.2px;top:287.3px;width:50.10000000000002px;height:11.399999999999977px;background:#e1e1e1;border:1px solid;border-color:#d0d0d0;"></div>
<div class="m" style="left:435.97px;top:290.94px;font-size:7.0px;line-height:7.0px;color:#262626;transform:scaleX(0.8617);transform-origin:0 0;">Confirm</div>
<div class="a" style="left:195px;top:314px;width:605px;height:10px;background:#d9d9d9;"></div>
<div class="t" style="left:197.59px;top:316.18px;font-size:7.6px;line-height:7.6px;color:#222;transform:scaleX(0.9855);transform-origin:0 0;">Log</div>
<div class="a" style="left:200px;top:330px;width:600px;height:91px;background:#fff;border:1px solid #c8c8c8;border-right:none"></div>
<div class="a" style="left:0px;top:427px;width:800px;height:7px;background:#f0f0f0;"></div>
<div class="a" style="left:201.2px;top:331px;width:598.8px;height:11.2px;background:#fff;"></div>
<div class="a" style="left:224.3px;top:331px;width:0.7px;height:11px;background:#e8e8e8;"></div>
<div class="a" style="left:311.3px;top:331px;width:0.7px;height:11px;background:#e8e8e8;"></div>
<div class="m" style="left:203.11px;top:334.24px;font-size:7.0px;line-height:7.0px;color:#262626;transform:scaleX(0.8582);transform-origin:0 0;">Level</div>
<div class="m" style="left:252.69px;top:334.24px;font-size:7.0px;line-height:7.0px;color:#262626;transform:scaleX(0.8091);transform-origin:0 0;">Timestamp</div>
<div class="m" style="left:548.33px;top:334.24px;font-size:7.0px;line-height:7.0px;color:#262626;transform:scaleX(0.8521);transform-origin:0 0;">Message</div>
<svg style="left:213px;top:343.5px" width="10" height="9.5"><path d="M5 0.8 L9.4 8.8 H0.6 Z" fill="#ffd83a" stroke="#ff9a10" stroke-width="1" stroke-linejoin="round"/><rect x="4.5" y="3.6" width="1" height="2.8" fill="#f08a10"/><rect x="4.5" y="7" width="1" height="0.9" fill="#f08a10"/></svg>
<div class="t" style="left:230.80px;top:344.78px;font-size:7.6px;line-height:7.6px;color:#111;transform:scaleX(0.8782);transform-origin:0 0;">Sat Jul 31 10:45:53 2021</div>
<div class="t" style="left:318.11px;top:344.78px;font-size:7.6px;line-height:7.6px;color:#111;transform:scaleX(0.9521);transform-origin:0 0;">No found project file in selected path</div>
<div class="a" style="left:13.5px;top:426px;width:179px;height:1px;background:#bdbdbd;"></div>
<div class="a" style="left:195px;top:426px;width:605px;height:1px;background:#bdbdbd;"></div>
<div class="a" style="left:195px;top:324px;width:1px;height:103px;background:#c8c8c8;"></div>
<div class="t" style="left:-1.14px;top:428.68px;font-size:7.6px;line-height:7.6px;color:#222;transform:scaleX(1.0223);transform-origin:0 0;">hift disconnection</div>
<div class="a" style="left:59.4px;top:428px;width:0.8px;height:6px;background:#e2e2e2;"></div>
<div class="a" style="left:516.5px;top:428px;width:0.8px;height:6px;background:#e2e2e2;"></div>
<div class="a" style="left:577px;top:428px;width:0.8px;height:6px;background:#e2e2e2;"></div>
<div class="a" style="left:635.5px;top:428px;width:0.8px;height:6px;background:#e2e2e2;"></div>
<div class="a" style="left:756.5px;top:428px;width:0.8px;height:6px;background:#e2e2e2;"></div>
<div class="t" style="left:519.74px;top:428.48px;font-size:7.6px;line-height:7.6px;color:#222;transform:scaleX(0.9518);transform-origin:0 0;">Configuration</div>
<svg style="left:579.6px;top:428.5px" width="8" height="8"><circle cx="3.8" cy="3.8" r="3.7" fill="#3a3a3a"/></svg>
<div class="t" style="left:698.38px;top:428.48px;font-size:7.6px;line-height:7.6px;color:#222;transform:scaleX(0.9046);transform-origin:0 0;">192.168.3.137</div>
<svg style="left:1.5px;top:48px" width="6.2" height="6.5"><path d="M0 0 L6 3.2 L0 6.4 Z" fill="#1a9a1a"/></svg>
<div class="a" style="left:1.9px;top:63.6px;width:5.7px;height:5.6px;background:#000;"></div>
<svg style="left:0.4px;top:78px" width="9" height="9"><path d="M4.2 0.9 A3.4 3.4 0 1 1 1.6 4.6" stroke="#c83838" stroke-width="1.1" fill="none"/><circle cx="1.8" cy="4.4" r="0.9" fill="#c83838"/></svg>
<svg style="left:0.9px;top:93.4px" width="8.2" height="8.2"><circle cx="4.1" cy="4.1" r="4" fill="#7ccb7c"/><path d="M2.2 3 H6 M2.5 5.2 L4 4.2 L5.8 5.8" stroke="#e8f8e8" stroke-width="0.8" fill="none"/></svg>
<svg style="left:-2.5px;top:0.5px" width="8" height="9"><rect x="0.3" y="0.6" width="6.8" height="6.8" rx="2.2" fill="#1d4a86"/><path d="M1 2.6 Q3.5 1.2 6.2 3 M1.2 5.2 Q3.6 4 6.6 5.6" stroke="#7fb6ea" stroke-width="1" fill="none"/><circle cx="5.4" cy="6" r="0.9" fill="#d8b840"/></svg>
</body></html>
